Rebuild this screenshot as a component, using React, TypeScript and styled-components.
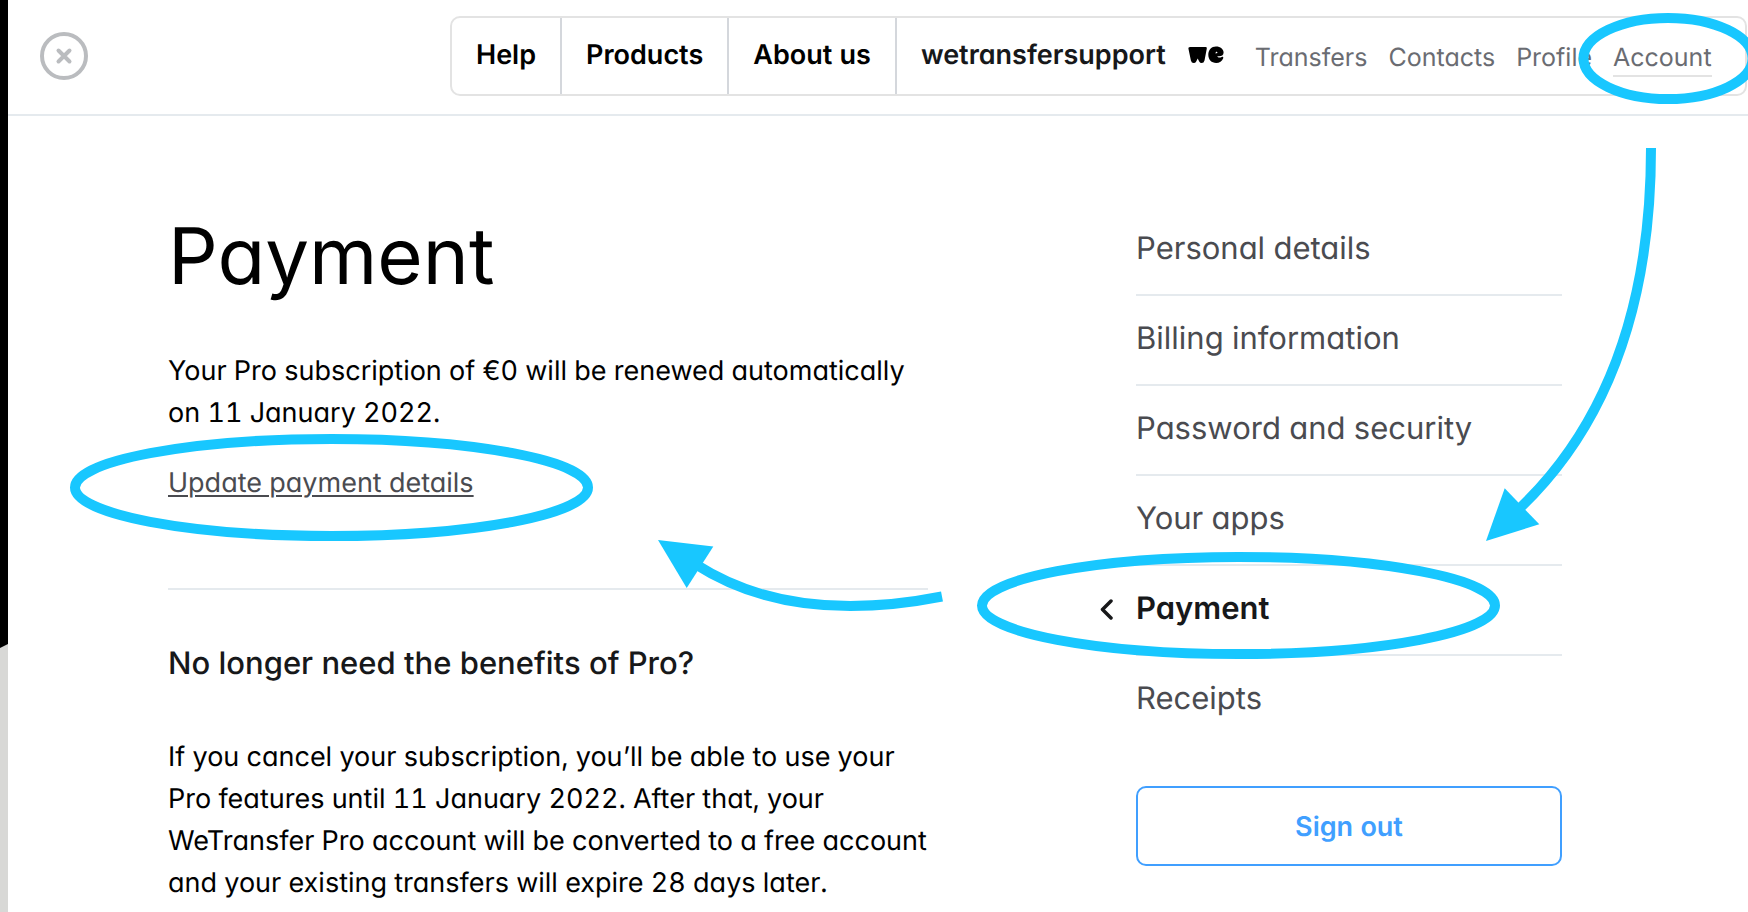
import React from 'react';
import styled, { createGlobalStyle } from 'styled-components';

const GlobalStyle = createGlobalStyle`
  *, *::before, *::after { box-sizing: border-box; }
  body {
    margin: 0;
    background: #fff;
    color: #000;
    font-family: Inter, "Liberation Sans", sans-serif;
    font-feature-settings: "cv11", "tnum";
    text-rendering: geometricPrecision;
  }
  h1, h2, p, ul { margin: 0; padding: 0; }
  a { color: inherit; text-decoration: none; }
  button {
    font: inherit;
    font-feature-settings: inherit;
    text-rendering: inherit;
    cursor: pointer;
  }
`;

const Page = styled.div`
  position: relative;
  display: flex;
  min-height: 100vh;
  overflow: hidden;
`;

const Backdrop = styled.div`
  flex: none;
  width: 8px;
  background: #d8d8d6;
`;

const BackdropPhoto = styled.div`
  height: 648px;
  background: #000;
  clip-path: polygon(0 0, 100% 0, 100% calc(100% - 4px), 0 100%);
`;

const Panel = styled.div`
  flex: 1;
  min-width: 0;
`;

const Header = styled.header`
  display: flex;
  align-items: center;
  height: 116px;
  padding: 0 1px 2px 32px;
  border-bottom: 2px solid #e5eaee;
`;

const CloseButton = styled.button`
  flex: none;
  width: 48px;
  height: 48px;
  padding: 0;
  border: 0;
  background: none;
  svg { display: block; }
`;

const NavBar = styled.nav`
  display: flex;
  flex: 1;
  height: 80px;
  margin-left: 362px;
  border: 2px solid #e3e3e3;
  border-radius: 10px;
  white-space: nowrap;
`;

const NavCell = styled.div`
  display: flex;
  align-items: center;
  padding: 0 24px 2px;
  font-size: 27px;
  font-weight: 600;
  line-height: 36px;
  border-right: 2px solid #d4d7dc;
  &:last-child {
    flex: 1;
    padding-right: 0;
    border-right: 0;
    color: #17181a;
  }
`;

const Logo = styled.svg`
  flex: none;
  margin: 0 31px 0 22px;
`;

const SubNav = styled.div`
  display: flex;
  gap: 21px;
  padding-top: 8px;
`;

const SubLink = styled.a<{ $current?: boolean }>`
  color: #6a6c72;
  font-size: 25px;
  font-weight: 400;
  line-height: 34px;
  border-bottom: 2px solid ${({ $current }) => ($current ? '#e3e3e3' : 'transparent')};
`;

const Body = styled.main`
  display: grid;
  grid-template-columns: minmax(0, 760px) 426px;
  column-gap: 208px;
  padding: 90px 16px 8px 160px;
`;

const Title = styled.h1`
  margin-bottom: 44px;
  font-size: 78px;
  font-weight: 400;
  line-height: 100px;
`;

const Text = styled.p`
  font-size: 27px;
  line-height: 42px;
`;

const UpdateLine = styled.p`
  margin-top: 28px;
  color: #4a4b50;
  font-size: 27px;
  line-height: 42px;
  a {
    text-decoration: underline;
    text-decoration-thickness: 2px;
    text-underline-offset: 3px;
  }
`;

const Divider = styled.hr`
  height: 2px;
  margin: 84px 0 53px;
  border: 0;
  background: #e5eaee;
`;

const Subtitle = styled.h2`
  margin-bottom: 51px;
  color: #17181a;
  font-size: 31px;
  font-weight: 500;
  line-height: 42px;
`;

const Menu = styled.ul`
  margin-bottom: 42px;
  list-style: none;
`;

const MenuItem = styled.li`
  border-bottom: 2px solid #e5eaee;
  &:last-child { border-bottom: 0; }
`;

const MenuLink = styled.a<{ $current?: boolean }>`
  display: flex;
  align-items: center;
  height: 88px;
  padding-bottom: 2px;
  color: ${({ $current }) => ($current ? '#17181a' : '#4a4b50')};
  font-size: 31px;
  font-weight: ${({ $current }) => ($current ? 600 : 400)};
  line-height: 38px;
`;

const Chevron = styled.svg`
  flex: none;
  margin: 0 22px 0 -36px;
`;

const SignOut = styled.button`
  width: 100%;
  height: 80px;
  border: 2px solid #409fff;
  border-radius: 10px;
  background: #fff;
  color: #409fff;
  font-size: 27px;
  font-weight: 600;
`;

const Annotations = styled.svg`
  position: absolute;
  top: 0;
  left: 0;
  pointer-events: none;
`;

const topLinks = ['Help', 'Products', 'About us'];
const accountLinks = ['Transfers', 'Contacts', 'Profile', 'Account'];
const sections = [
  'Personal details',
  'Billing information',
  'Password and security',
  'Your apps',
  'Payment',
  'Receipts',
];

export default function App() {
  return (
    <Page>
      <GlobalStyle />
      <Backdrop>
        <BackdropPhoto />
      </Backdrop>
      <Panel>
        <Header>
          <CloseButton aria-label="Close">
            <svg width="48" height="48" viewBox="0 0 48 48" fill="none" stroke="#babcbf" strokeWidth="4" strokeLinecap="round">
              <circle cx="24" cy="24" r="22" />
              <path d="M18.5 18.5l11 11M29.5 18.5l-11 11" />
            </svg>
          </CloseButton>
          <NavBar>
            {topLinks.map((label) => (
              <NavCell key={label}>
                <a href="#">{label}</a>
              </NavCell>
            ))}
            <NavCell>
              <a href="#">wetransfersupport</a>
              <Logo width="36" height="18" viewBox="0 0 36 18" aria-hidden="true">
                <path d="M2 1H17.600Q19 1 18.800 2.400L16.500 14.500Q15.900 17 13.700 17Q12 17 11.200 15.400L9.700 12.600L8.200 15.400Q7.400 17 5.700 17Q3.500 17 2.900 14.500L.4 2.600Q.1 1 2 1Z" />
                <path
                  fillRule="evenodd"
                  d="M28 .5C32.500 .5 35.600 3.200 35.600 6.400C35.600 9 33.500 10.200 31 10.200H29.200C29.800 11.500 31.700 12 33.700 10.900C34.700 10.400 35.700 11.100 35.200 12.300C34.100 15.200 31.500 17 28.200 17C23.500 17 20.300 13.700 20.300 8.800C20.300 3.900 23.500 .5 28 .5ZM28.600 5.800C27.900 5.800 27.500 6.400 27.600 7.500C28.600 7.600 29.400 7.300 29.400 6.600C29.400 6.100 29.100 5.800 28.600 5.800Z"
                />
              </Logo>
              <SubNav>
                {accountLinks.map((label) => (
                  <SubLink key={label} href="#" $current={label === 'Account'}>
                    {label}
                  </SubLink>
                ))}
              </SubNav>
            </NavCell>
          </NavBar>
        </Header>
        <Body>
          <article>
            <Title>Payment</Title>
            <Text>Your Pro subscription of €0 will be renewed automatically on 11 January 2022.</Text>
            <UpdateLine>
              <a href="#">Update payment details</a>
            </UpdateLine>
            <Divider />
            <Subtitle>No longer need the benefits of Pro?</Subtitle>
            <Text>
              If you cancel your subscription, you’ll be able to use your Pro features until 11 January
              2022. After that, your WeTransfer Pro account will be converted to a free account and your
              existing transfers will expire 28 days later.
            </Text>
          </article>
          <aside>
            <Menu>
              {sections.map((label) => {
                const current = label === 'Payment';
                return (
                  <MenuItem key={label}>
                    <MenuLink href="#" $current={current}>
                      {current && (
                        <Chevron width="14" height="22" viewBox="0 0 14 22" fill="none" stroke="currentColor" strokeWidth="3.500" strokeLinecap="round" strokeLinejoin="round" aria-hidden="true">
                          <path d="M11 3L2.500 11.500L11 20" />
                        </Chevron>
                      )}
                      {label}
                    </MenuLink>
                  </MenuItem>
                );
              })}
            </Menu>
            <SignOut>Sign out</SignOut>
          </aside>
        </Body>
      </Panel>
      <Annotations width="1748" height="912" viewBox="0 0 1748 912" fill="none" stroke="#18c7ff" strokeWidth="10" aria-hidden="true">
        <ellipse cx="1668" cy="58.500" rx="84.500" ry="40.500" />
        <ellipse cx="331.500" cy="487.500" rx="256.500" ry="48.500" />
        <ellipse cx="1238.500" cy="605.500" rx="256.500" ry="48.500" />
        <path d="M1651 148Q1651 383 1520 508" />
        <path d="M942 596.500Q792 626 696 564.500" />
        <path d="M1486 541L1504.700 488.300L1539.300 524.300Z" fill="#18c7ff" stroke="none" />
        <path d="M658 540L713.300 546.500L686.700 588Z" fill="#18c7ff" stroke="none" />
      </Annotations>
    </Page>
  );
}
